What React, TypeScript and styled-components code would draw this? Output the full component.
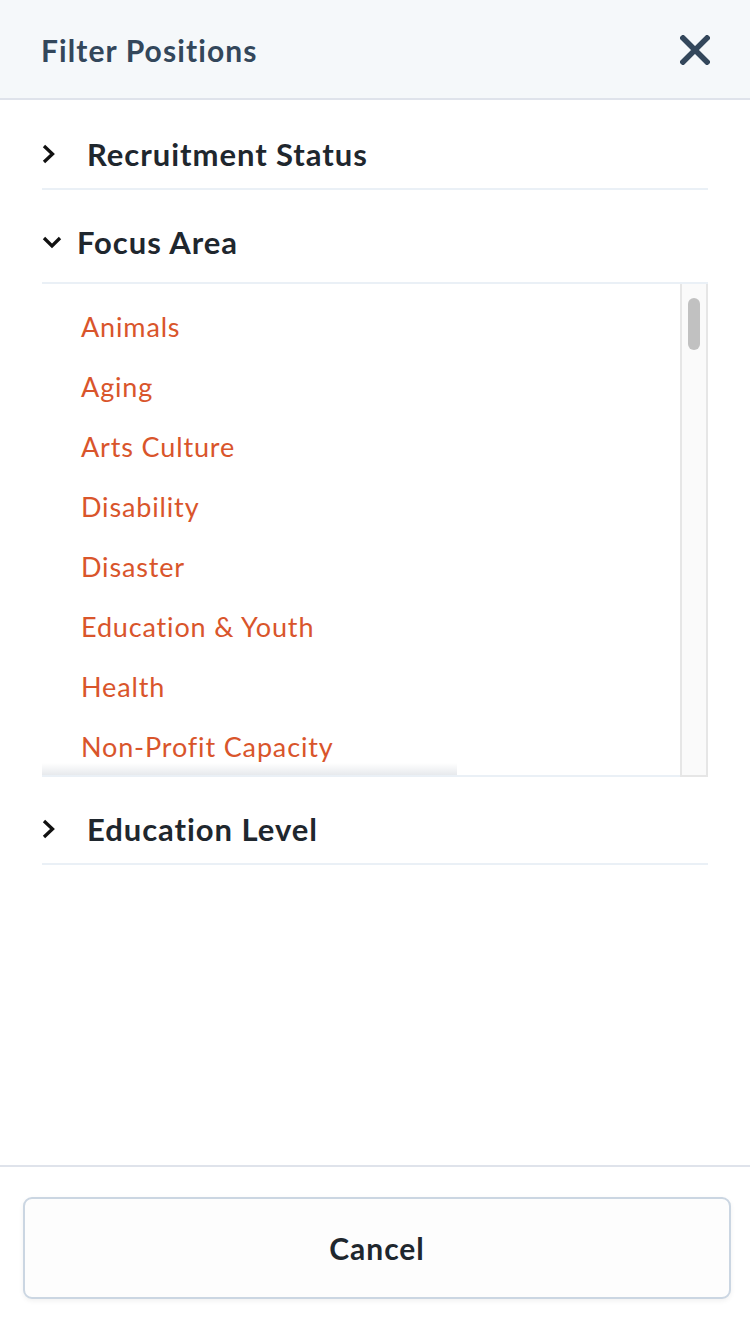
import React from "react";
import styled, { createGlobalStyle } from "styled-components";

const Global = createGlobalStyle`
  html, body { margin: 0; padding: 0; background: #fff; }
  body { font-family: Lato, "Open Sans", sans-serif; -webkit-font-smoothing: antialiased; }
  * { box-sizing: border-box; }
`;

const Page = styled.div`
  width: 750px;
  height: 1334px;
  display: flex;
  flex-direction: column;
  background: #fff;
`;

const Header = styled.header`
  height: 100px;
  flex: none;
  display: flex;
  align-items: center;
  justify-content: space-between;
  padding: 2px 40px 0 41px;
  background: #f5f8fa;
  border-bottom: 2px solid #dfe3eb;
`;

const Title = styled.h1`
  margin: 0;
  font-size: 30px;
  font-weight: 700;
  color: #33475b;
  letter-spacing: 1.1px;
`;

const CloseButton = styled.button`
  border: 0;
  background: none;
  padding: 0;
  width: 30px;
  height: 30px;
  display: flex;
  cursor: pointer;
`;

const Body = styled.main`
  flex: 1;
  padding: 2px 42px 0;
  display: flex;
  flex-direction: column;
`;

const Section = styled.section<{ $open?: boolean }>`
  border-bottom: ${(p) => (p.$open ? "none" : "2px solid #eaf0f6")};
`;

const SectionHeader = styled.div<{ $open?: boolean }>`
  display: flex;
  align-items: center;
  padding: 34px 0 ${(p) => (p.$open ? 22 : 16)}px;
`;

const ChevronSlot = styled.span<{ $w: number }>`
  width: ${(p) => p.$w}px;
  display: flex;
  align-items: center;
  flex: none;
`;

const SectionTitle = styled.h2`
  margin: 0;
  font-size: 31px;
  line-height: 36px;
  font-weight: 700;
  color: #1f272e;
  letter-spacing: 0.95px;
`;

const ListBox = styled.div`
  height: 495px;
  display: flex;
  border-top: 2px solid #eaf0f6;
  overflow: hidden;
`;

const List = styled.ul`
  flex: 1;
  list-style: none;
  margin: 0;
  padding: 12px 0 0 39px;
  border-bottom: 2px solid #eaf0f6;
  overflow: hidden;
  position: relative;
`;

const Item = styled.li`
  height: 60px;
  display: flex;
  align-items: center;
  font-size: 27px;
  color: #d9552b;
  letter-spacing: 0.85px;
`;

const Fade = styled.div`
  position: absolute;
  left: 0;
  bottom: 0;
  width: 415px;
  height: 12px;
  background: linear-gradient(to bottom, rgba(235, 235, 235, 0), rgba(225, 228, 232, 0.8));
`;

const Track = styled.div`
  width: 28px;
  flex: none;
  background: #fafafa;
  border-left: 2px solid #e6e6e6;
  border-right: 2px solid #e6e6e6;
  border-bottom: 2px solid #e6e6e6;
  padding: 14px 0 0 6px;
`;

const Thumb = styled.div`
  width: 12px;
  height: 52px;
  border-radius: 6px;
  background: #c1c1c1;
`;

const Footer = styled.footer`
  flex: none;
  border-top: 2px solid #dfe3eb;
  padding: 30px 19px 35px 23px;
`;

const CancelButton = styled.button`
  width: 100%;
  height: 102px;
  border: 2px solid #cbd6e2;
  border-radius: 9px;
  background: #fdfdfd;
  box-shadow: 0 2px 5px rgba(0, 0, 0, 0.06);
  font-family: inherit;
  font-size: 30px;
  font-weight: 700;
  letter-spacing: 1px;
  color: #1f272e;
  cursor: pointer;
`;

const ChevronRight = () => (
  <svg width="14" height="20" viewBox="0 0 14 20">
    <path d="M2 2 L10.5 10 L2 18" fill="none" stroke="#111" strokeWidth="3.3" strokeLinejoin="miter" />
  </svg>
);

const ChevronDown = () => (
  <svg width="20" height="14" viewBox="0 0 20 14">
    <path d="M2 3 L10 11 L18 3" fill="none" stroke="#111" strokeWidth="3.3" strokeLinejoin="miter" />
  </svg>
);

const CloseIcon = () => (
  <svg width="30" height="30" viewBox="0 0 30 30">
    <path d="M3 3 L27 27 M27 3 L3 27" stroke="#33475b" strokeWidth="5.5" strokeLinecap="square" />
  </svg>
);

const focusAreas = [
  "Animals",
  "Aging",
  "Arts Culture",
  "Disability",
  "Disaster",
  "Education & Youth",
  "Health",
  "Non-Profit Capacity",
];

export default function App() {
  return (
    <Page>
      <Global />
      <Header>
        <Title>Filter Positions</Title>
        <CloseButton aria-label="Close">
          <CloseIcon />
        </CloseButton>
      </Header>
      <Body>
        <Section>
          <SectionHeader>
            <ChevronSlot $w={45}>
              <ChevronRight />
            </ChevronSlot>
            <SectionTitle>Recruitment Status</SectionTitle>
          </SectionHeader>
        </Section>
        <Section $open>
          <SectionHeader $open>
            <ChevronSlot $w={35}>
              <ChevronDown />
            </ChevronSlot>
            <SectionTitle>Focus Area</SectionTitle>
          </SectionHeader>
          <ListBox>
            <List>
              {focusAreas.map((f) => (
                <Item key={f}>{f}</Item>
              ))}
              <Fade />
            </List>
            <Track>
              <Thumb />
            </Track>
          </ListBox>
        </Section>
        <Section>
          <SectionHeader>
            <ChevronSlot $w={45}>
              <ChevronRight />
            </ChevronSlot>
            <SectionTitle>Education Level</SectionTitle>
          </SectionHeader>
        </Section>
      </Body>
      <Footer>
        <CancelButton>Cancel</CancelButton>
      </Footer>
    </Page>
  );
}
